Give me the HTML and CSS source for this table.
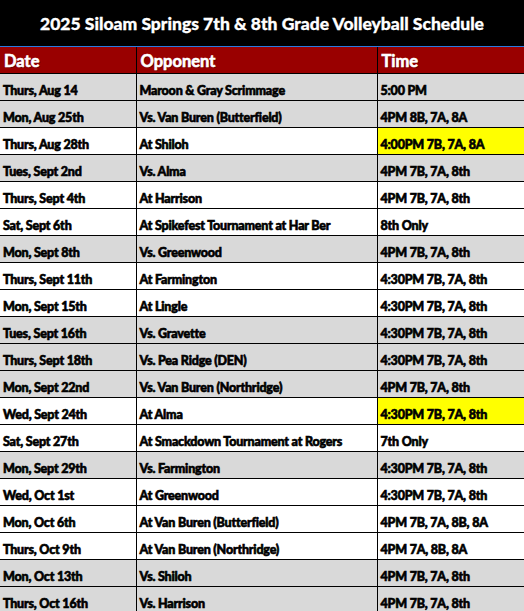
FILE: index.html
```html
<!DOCTYPE html>
<html>
<head>
<meta charset="utf-8">
<link rel="stylesheet" href="styles.css">
</head>
<body>
<div class="sheet">
  <div class="title">2025 Siloam Springs 7th &amp; 8th Grade Volleyball Schedule</div>
  <table class="sched">
    <colgroup><col class="c1"><col class="c2"><col class="c3"></colgroup>
    <thead>
      <tr><th>Date</th><th>Opponent</th><th>Time</th></tr>
    </thead>
    <tbody>
      <tr class="g"><td>Thurs, Aug 14</td><td>Maroon &amp; Gray Scrimmage</td><td>5:00 PM</td></tr>
      <tr class="g"><td>Mon, Aug 25th</td><td>Vs. Van Buren (Butterfield)</td><td>4PM 8B, 7A, 8A</td></tr>
      <tr><td>Thurs, Aug 28th</td><td>At Shiloh</td><td class="y">4:00PM 7B, 7A, 8A</td></tr>
      <tr class="g"><td>Tues, Sept 2nd</td><td>Vs. Alma</td><td>4PM 7B, 7A, 8th</td></tr>
      <tr><td>Thurs, Sept 4th</td><td>At Harrison</td><td>4PM 7B, 7A, 8th</td></tr>
      <tr><td>Sat, Sept 6th</td><td>At Spikefest Tournament at Har Ber</td><td>8th Only</td></tr>
      <tr class="g"><td>Mon, Sept 8th</td><td>Vs. Greenwood</td><td>4PM 7B, 7A, 8th</td></tr>
      <tr><td>Thurs, Sept 11th</td><td>At Farmington</td><td>4:30PM 7B, 7A, 8th</td></tr>
      <tr><td>Mon, Sept 15th</td><td>At Lingle</td><td>4:30PM 7B, 7A, 8th</td></tr>
      <tr class="g"><td>Tues, Sept 16th</td><td>Vs. Gravette</td><td>4:30PM 7B, 7A, 8th</td></tr>
      <tr class="g"><td>Thurs, Sept 18th</td><td>Vs. Pea Ridge (DEN)</td><td>4:30PM 7B, 7A, 8th</td></tr>
      <tr class="g"><td>Mon, Sept 22nd</td><td>Vs. Van Buren (Northridge)</td><td>4PM 7B, 7A, 8th</td></tr>
      <tr><td>Wed, Sept 24th</td><td>At Alma</td><td class="y">4:30PM 7B, 7A, 8th</td></tr>
      <tr><td>Sat, Sept 27th</td><td>At Smackdown Tournament at Rogers</td><td>7th Only</td></tr>
      <tr class="g"><td>Mon, Sept 29th</td><td>Vs. Farmington</td><td>4:30PM 7B, 7A, 8th</td></tr>
      <tr><td>Wed, Oct 1st</td><td>At Greenwood</td><td>4:30PM 7B, 7A, 8th</td></tr>
      <tr><td>Mon, Oct 6th</td><td>At Van Buren (Butterfield)</td><td>4PM 7B, 7A, 8B, 8A</td></tr>
      <tr><td>Thurs, Oct 9th</td><td>At Van Buren (Northridge)</td><td>4PM 7A, 8B, 8A</td></tr>
      <tr class="g"><td>Mon, Oct 13th</td><td>Vs. Shiloh</td><td>4PM 7B, 7A, 8th</td></tr>
      <tr class="g"><td>Thurs, Oct 16th</td><td>Vs. Harrison</td><td>4PM 7B, 7A, 8th</td></tr>
    </tbody>
  </table>
</div>
</body>
</html>
```

FILE: styles.css
```css
html, body {
  margin: 0;
  padding: 0;
  background: #ffffff;
}
.sheet {
  width: 524px;
  font-family: "Lato", "Liberation Sans", sans-serif;
  font-weight: 900;
  color: #000;
}
.title {
  height: 46px;
  background: #000;
  border-bottom: 1px solid #2b7be0;
  color: #fff;
  font-size: 17.5px;
  display: flex;
  align-items: center;
  justify-content: center;
  white-space: nowrap;
  -webkit-text-stroke: 0.3px #fff;
}
.sched {
  width: 524px;
  border-collapse: collapse;
  table-layout: fixed;
}
.c1 { width: 136px; }
.c2 { width: 241px; }
.c3 { width: 147px; }
.sched thead tr { height: 26px; }
.sched tbody tr { height: 27px; }
.sched th {
  background: #990000;
  color: #fff;
  font-size: 16.5px;
  text-align: left;
  padding: 0 3px 4px 4px;
  vertical-align: bottom;
  border-left: 1px solid #000;
  border-bottom: 1px solid #000;
  text-shadow: 1px 1px 0 rgba(60, 0, 0, 0.55);
  line-height: 16px;
  -webkit-text-stroke: 0.6px #fff;
}
.sched td {
  padding: 0 3px 2px 3px;
  vertical-align: bottom;
  font-size: 12.5px;
  line-height: 14px;
  border-left: 1px solid #000;
  border-bottom: 1px solid #000;
  white-space: nowrap;
  overflow: hidden;
  letter-spacing: -0.2px;
  -webkit-text-stroke: 0.6px #000;
}
.sched th:first-child,
.sched td:first-child {
  border-left: none;
}
.sched tr.g td {
  background: #d9d9d9;
}
.sched td.y,
.sched tr.g td.y {
  background: #ffff00;
}
```
